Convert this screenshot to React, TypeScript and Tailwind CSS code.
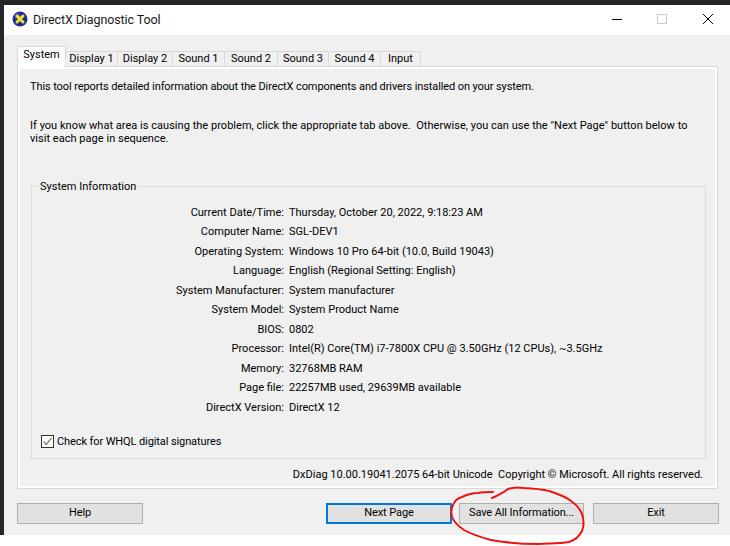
const tabs = [
  { label: "Display 1", w: "w-[52px]" },
  { label: "Display 2", w: "w-[55px]" },
  { label: "Sound 1", w: "w-[52px]" },
  { label: "Sound 2", w: "w-[53px]" },
  { label: "Sound 3", w: "w-[51px]" },
  { label: "Sound 4", w: "w-[52px]" },
  { label: "Input", w: "w-[40px]" },
];

const rows: [string, string][] = [
  ["Current Date/Time:", "Thursday, October 20, 2022, 9:18:23 AM"],
  ["Computer Name:", "SGL-DEV1"],
  ["Operating System:", "Windows 10 Pro 64-bit (10.0, Build 19043)"],
  ["Language:", "English (Regional Setting: English)"],
  ["System Manufacturer:", "System manufacturer"],
  ["System Model:", "System Product Name"],
  ["BIOS:", "0802"],
  ["Processor:", "Intel(R) Core(TM) i7-7800X CPU @ 3.50GHz (12 CPUs), ~3.5GHz"],
  ["Memory:", "32768MB RAM"],
  ["Page file:", "22257MB used, 29639MB available"],
  ["DirectX Version:", "DirectX 12"],
];

function Btn({ label, w, focus }: { label: string; w: string; focus?: boolean }) {
  return (
    <button
      className={`${w} h-[21px] flex items-center justify-center whitespace-nowrap bg-[#e1e1e1] text-[11px] tracking-[-0.1px] text-black ${
        focus ? "border-2 border-[#0078d7]" : "border border-[#adadad]"
      }`}
    >
      {label}
    </button>
  );
}

export default function App() {
  return (
    <div className="relative w-[730px] h-[546px] bg-white overflow-hidden font-['Roboto',sans-serif] text-black">
      <div className="h-[5px] bg-[#262626]" />
      <div className="flex h-[530px]">
        <div className="w-[5px] bg-[#262626]" />
        <div className="flex-1 flex flex-col bg-[#f0f0f0]">
          {/* title bar */}
          <div className="h-[30px] bg-white flex items-center pl-[8px] shrink-0">
            <svg width="16" height="16" viewBox="0 0 16 16" className="mb-[2px]">
              <circle cx="8" cy="8" r="7.5" fill="#1c2a9c" />
              <circle cx="5.5" cy="5" r="3" fill="#5568d8" opacity="0.6" />
              <path d="M5 5 L11 11 M11 5 L5 11" stroke="#f2e02a" strokeWidth="3" strokeLinecap="round" />
            </svg>
            <span className="ml-[5px] text-[12.5px] tracking-[-0.1px] text-[#1a1a1a]">DirectX Diagnostic Tool</span>
            <div className="ml-auto flex items-center mb-[2px]">
              <svg width="10" height="10" viewBox="0 0 10 10" className="mr-[35px]">
                <path d="M0 5.5 H10" stroke="#000" strokeWidth="1" />
              </svg>
              <svg width="10" height="10" viewBox="0 0 10 10" className="mr-[36px]">
                <rect x="0.5" y="0.5" width="9" height="9" fill="none" stroke="#cccccc" strokeWidth="1" />
              </svg>
              <svg width="10" height="10" viewBox="0 0 10 10" className="mr-[17px]">
                <path d="M0 0 L10 10 M10 0 L0 10" stroke="#000" strokeWidth="1" />
              </svg>
            </div>
          </div>

          {/* body */}
          <div className="pl-[13px] pr-[11px] pt-[11px] flex-1 flex flex-col">
            <div className="relative z-10 flex items-end h-[20px] text-[11px]">
              <div className="w-[49px] h-[21px] bg-white border border-b-0 border-[#d9d9d9] flex items-center justify-center -mb-px pb-[3px]">
                System
              </div>
              {tabs.map((t) => (
                <div
                  key={t.label}
                  className={`${t.w} h-[15px] bg-[#f0f0f0] border border-l-0 border-b-0 border-[#d9d9d9] flex items-center justify-center`}
                >
                  {t.label}
                </div>
              ))}
            </div>
            <div className="w-[701px] h-[423px] bg-[#f0f0f0] border-[3px] border-white outline outline-1 outline-[#d9d9d9] -outline-offset-1 pt-[11px] pl-[10px] text-[11px] leading-[13px]">
              <p className="tracking-[-0.1px]">This tool reports detailed information about the DirectX components and drivers installed on your system.</p>
              <p className="mt-[26px] w-[665px] tracking-[0.03px]">
                If you know what area is causing the problem, click the appropriate tab above.&nbsp; Otherwise, you can use the "Next Page" button below to visit each page in sequence.
              </p>
              <div className="relative mt-[41px] ml-[1px] w-[675px] h-[273px] border border-[#dcdcdc]">
                <span className="absolute -top-[7px] left-[7px] bg-[#f0f0f0] px-[1px] leading-[14px]">System Information</span>
                <div className="pt-[15.5px] flex flex-col">
                  {rows.map(([k, v]) => (
                    <div key={k} className="flex h-[19.5px] items-center">
                      <span className="w-[252px] text-right">{k}</span>
                      <span className="ml-[5px]">{v}</span>
                    </div>
                  ))}
                </div>
                <div className="absolute left-[9px] top-[248px] flex items-center">
                  <svg width="13" height="13" viewBox="0 0 13 13">
                    <rect x="0.5" y="0.5" width="12" height="12" fill="#fff" stroke="#333" strokeWidth="1" />
                    <path d="M2.5 6.5 L5.2 9.5 L10.5 3" fill="none" stroke="#555" strokeWidth="1.1" />
                  </svg>
                  <span className="ml-[3px] tracking-[-0.1px]">Check for WHQL digital signatures</span>
                </div>
              </div>
              <p className="mt-[9px] w-[673px] text-right">
                DxDiag 10.00.19041.2075 64-bit Unicode&nbsp; Copyright © Microsoft. All rights reserved.
              </p>
            </div>

            <div className="mt-[14px] flex">
              <Btn label="Help" w="w-[126px]" />
              <div className="w-[183px]" />
              <Btn label="Next Page" w="w-[126px]" focus />
              <div className="w-[7px]" />
              <Btn label="Save All Information..." w="w-[125px]" />
              <div className="w-[9px]" />
              <Btn label="Exit" w="w-[126px]" />
            </div>
          </div>
        </div>
      </div>

      {/* hand-drawn annotation */}
      <svg className="absolute left-0 top-0 pointer-events-none" width="730" height="546" viewBox="0 0 730 546">
        <path
          d="M492 498 C499 495 503 493 508 489 C513 487 518 487 524 488 C535 489 545 489 552 492 C561 495 566 497 571 501 C577 505 580 509 582 514 C584 520 584 526 582 531 C579 537 575 540 569 542 C558 544 548 543 538 544 C526 544 508 543 491 540 C480 537 471 534 464 530 C458 526 454 522 452 517 C451 513 451 509 453 505 C455 500 458 498 462 497 C468 494 473 493 478 493 C483 492 488 492 493 492"
          fill="none"
          stroke="#ee1111"
          strokeWidth="2"
          strokeLinecap="round"
        />
      </svg>
    </div>
  );
}
